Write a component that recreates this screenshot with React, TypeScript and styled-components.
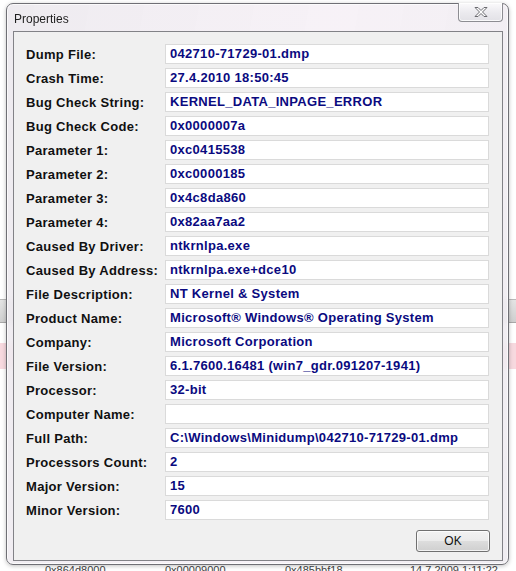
import styled, { createGlobalStyle } from 'styled-components';

const GlobalStyle = createGlobalStyle`
    html, body {
        margin: 0;
        padding: 0;
        background: #ffffff;
    }
`;

const rows: [string, string][] = [
    ['Dump File:', '042710-71729-01.dmp'],
    ['Crash Time:', '27.4.2010 18:50:45'],
    ['Bug Check String:', 'KERNEL_DATA_INPAGE_ERROR'],
    ['Bug Check Code:', '0x0000007a'],
    ['Parameter 1:', '0xc0415538'],
    ['Parameter 2:', '0xc0000185'],
    ['Parameter 3:', '0x4c8da860'],
    ['Parameter 4:', '0x82aa7aa2'],
    ['Caused By Driver:', 'ntkrnlpa.exe'],
    ['Caused By Address:', 'ntkrnlpa.exe+dce10'],
    ['File Description:', 'NT Kernel & System'],
    ['Product Name:', 'Microsoft® Windows® Operating System'],
    ['Company:', 'Microsoft Corporation'],
    ['File Version:', '6.1.7600.16481 (win7_gdr.091207-1941)'],
    ['Processor:', '32-bit'],
    ['Computer Name:', ''],
    ['Full Path:', 'C:\\Windows\\Minidump\\042710-71729-01.dmp'],
    ['Processors Count:', '2'],
    ['Major Version:', '15'],
    ['Minor Version:', '7600'],
];

const bottomCells = ['0x864d8000', '0x00009000', '0x485bbf18', '14.7.2009 1:11:22'];

const Desktop = styled.div`
    position: relative;
    width: 516px;
    height: 571px;
    overflow: hidden;
    background: #ffffff;
    font-family: 'Liberation Sans', Arial, sans-serif;
`;

/* the list of the application behind the dialog */
const Backdrop = styled.div`
    display: flex;
    flex-direction: column;
    height: 100%;
`;

const Spacer = styled.div<{ $h: number }>`
    height: ${(p) => p.$h}px;
    flex: none;
`;

const HeaderBand = styled.div`
    height: 22px;
    flex: none;
    background: linear-gradient(#e4e4e4, #cfcfcf);
    border-top: 1px solid #b8b8b8;
    border-bottom: 1px solid #a8a8a8;
`;

const SelectedBand = styled.div`
    height: 26px;
    flex: none;
    background: #f7d9df;
`;

const BottomRow = styled.div`
    margin-top: auto;
    height: 8px;
    display: flex;
    font-size: 11px;
    line-height: 14px;
    color: #444;
`;

const BottomCell = styled.div<{ $w: number }>`
    width: ${(p) => p.$w}px;
    flex: none;
    white-space: nowrap;
`;

const Window = styled.div`
    position: absolute;
    left: 6px;
    top: 3px;
    width: 503px;
    height: 562px;
    box-sizing: border-box;
    border: 1px solid #6f6f75;
    border-radius: 7px;
    background: linear-gradient(100deg, rgba(236, 233, 238, 0.9) 0%, rgba(246, 240, 246, 0.88) 55%, rgba(238, 235, 240, 0.9) 100%);
    backdrop-filter: blur(3px);
    box-shadow: inset 0 0 0 1px rgba(255, 255, 255, 0.7), 0 1px 4px rgba(0, 0, 0, 0.25);
    display: flex;
    flex-direction: column;
`;

const TitleBar = styled.div`
    height: 27px;
    flex: none;
    display: flex;
    align-items: flex-start;
    justify-content: space-between;
    padding-left: 7px;
    padding-right: 5px;
`;

const Title = styled.span`
    font-family: 'Liberation Sans', Arial, sans-serif;
    font-size: 12px;
    line-height: 14px;
    margin-top: 8px;
    color: #1e1e1e;
`;

const CloseButton = styled.div`
    width: 45px;
    height: 19px;
    margin-top: -1px;
    box-sizing: border-box;
    border: 1px solid #8d8d92;
    border-top: none;
    border-radius: 0 0 4px 4px;
    background: linear-gradient(#fbfafc, #ecebef 50%, #e2e1e6);
    box-shadow: inset 0 0 0 1px rgba(255, 255, 255, 0.8);
    display: flex;
    align-items: center;
    justify-content: center;
`;

const Panel = styled.div`
    flex: 1;
    margin: 0 5px 3px 6px;
    box-sizing: border-box;
    border: 1px solid #828287;
    background: #f0f0f0;
    padding: 12px 13px 8px 12px;
    display: flex;
    flex-direction: column;
    gap: 4px;
`;

const Row = styled.div`
    display: flex;
    align-items: center;
    height: 20px;
`;

const Label = styled.div`
    width: 139px;
    flex: none;
    font-size: 13px;
    font-weight: bold;
    letter-spacing: 0.3px;
    color: #101010;
    white-space: nowrap;
`;

const Value = styled.div`
    width: 324px;
    height: 20px;
    flex: none;
    box-sizing: border-box;
    background: #ffffff;
    border: 1px solid #dadada;
    padding-left: 4px;
    font-size: 13px;
    font-weight: bold;
    letter-spacing: 0.3px;
    line-height: 18px;
    color: #0a0a80;
    white-space: nowrap;
    overflow: hidden;
`;

const Footer = styled.div`
    display: flex;
    justify-content: flex-end;
    margin-top: 6px;
    margin-right: -1px;
`;

const OkButton = styled.button`
    width: 74px;
    height: 22px;
    box-sizing: border-box;
    border: 1px solid #707070;
    border-radius: 3px;
    background: linear-gradient(#f2f2f2 0%, #ebebeb 48%, #dddddd 52%, #cfcfcf 100%);
    box-shadow: inset 0 0 0 1px rgba(255, 255, 255, 0.75);
    font-family: 'Liberation Sans', Arial, sans-serif;
    font-size: 12px;
    color: #111;
    padding: 0;
`;

const CloseGlyph = () => (
    <svg width="16" height="12" viewBox="0 0 16 12">
        <path
            d="M2 1.5 L5 1.5 L8 4.5 L11 1.5 L14 1.5 L9.5 6 L14 10.5 L11 10.5 L8 7.5 L5 10.5 L2 10.5 L6.5 6 Z"
            fill="#ffffff"
            stroke="#6b6b70"
            strokeWidth="1"
            strokeLinejoin="round"
        />
    </svg>
);

export default function App() {
    return (
        <Desktop>
            <GlobalStyle />
            <Backdrop>
                <Spacer $h={299} />
                <HeaderBand />
                <Spacer $h={20} />
                <SelectedBand />
                <BottomRow>
                    <Spacer $h={0} style={{ width: 45 }} />
                    <BottomCell $w={120}>{bottomCells[0]}</BottomCell>
                    <BottomCell $w={120}>{bottomCells[1]}</BottomCell>
                    <BottomCell $w={125}>{bottomCells[2]}</BottomCell>
                    <BottomCell $w={110}>{bottomCells[3]}</BottomCell>
                </BottomRow>
            </Backdrop>

            <Window>
                <TitleBar>
                    <Title>Properties</Title>
                    <CloseButton>
                        <CloseGlyph />
                    </CloseButton>
                </TitleBar>
                <Panel>
                    {rows.map(([label, value]) => (
                        <Row key={label}>
                            <Label>{label}</Label>
                            <Value>{value}</Value>
                        </Row>
                    ))}
                    <Footer>
                        <OkButton>OK</OkButton>
                    </Footer>
                </Panel>
            </Window>
        </Desktop>
    );
}
